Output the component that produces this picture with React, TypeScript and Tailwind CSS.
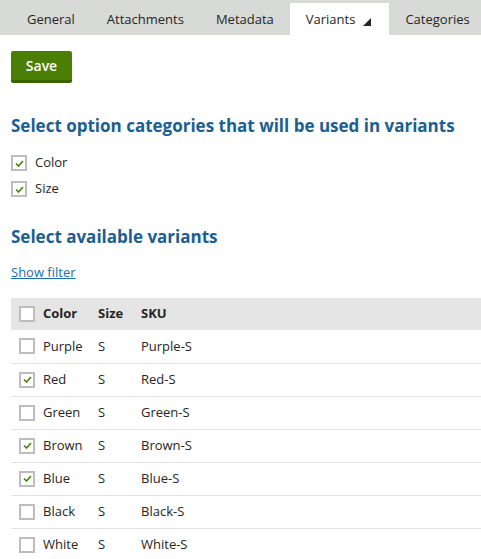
import React from 'react';

type Variant = { color: string; sku: string; checked: boolean };

const variants: Variant[] = [
  { color: 'Purple', sku: 'Purple-S', checked: false },
  { color: 'Red', sku: 'Red-S', checked: true },
  { color: 'Green', sku: 'Green-S', checked: false },
  { color: 'Brown', sku: 'Brown-S', checked: true },
  { color: 'Blue', sku: 'Blue-S', checked: true },
  { color: 'Black', sku: 'Black-S', checked: false },
  { color: 'White', sku: 'White-S', checked: false },
];

const tabs = ['General', 'Attachments', 'Metadata', 'Variants', 'Categories'];

function Checkbox({ checked }: { checked: boolean }) {
  return (
    <span className="flex h-4 w-4 shrink-0 items-center justify-center border-2 border-[#bdbdbd] bg-white">
      {checked && (
        <svg width="9" height="7" viewBox="0 0 9 7">
          <path d="M1 3.5 L3.5 6 L8 1" fill="none" stroke="#4a7e06" strokeWidth="1.6" />
        </svg>
      )}
    </span>
  );
}

export default function App() {
  return (
    <div className="min-h-[559px] w-[481px] overflow-hidden bg-white text-[#262524]" style={{ fontFamily: '"Open Sans", "Noto Sans", sans-serif' }}>
      {/* Tabs */}
      <div className="flex h-[35px] items-end bg-[#d8dad7] pl-[11px]">
        {tabs.map((t) => (
          <div
            key={t}
            className={`flex h-[32px] items-center pt-[2px] text-[13px] ${t === 'Variants' ? 'bg-white pl-4 pr-[18px]' : 'px-4'}`}
          >
            {t}
            {t === 'Variants' && (
              <svg width="8" height="8" viewBox="0 0 8 8" className="ml-2 mt-[3px]">
                <path d="M8 0 L8 8 L0 8 Z" fill="#262524" />
              </svg>
            )}
          </div>
        ))}
      </div>

      <div className="px-[11px]">
        <button className="mt-4 flex h-[32px] w-[61px] items-center justify-center rounded-[2px] border-b-[3px] border-[#3a6403] bg-[#4b7f03] text-[14px] font-semibold text-white">
          Save
        </button>

        <h2 className="mt-[31px] text-[17px] font-bold leading-[24px] text-[#1b5e91]">
          Select option categories that will be used in variants
        </h2>
        <div className="mt-[16px] flex flex-col gap-[8px] text-[13px]">
          <label className="flex h-[18px] items-center gap-[8px]">
            <Checkbox checked />
            Color
          </label>
          <label className="flex h-[18px] items-center gap-[8px]">
            <Checkbox checked />
            Size
          </label>
        </div>

        <h2 className="mt-[27px] text-[17px] font-bold leading-[24px] text-[#1b5e91]">Select available variants</h2>
        <a className="mt-[14px] block text-[13px] leading-[18px] text-[#1a6fa8] underline">Show filter</a>
      </div>

      <table className="ml-[11px] mt-[17px] w-[470px] border-collapse text-[13px]">
        <thead>
          <tr className="h-[32px] bg-[#e5e5e5] text-left font-bold">
            <th className="w-[32px] pl-[8px]">
              <Checkbox checked={false} />
            </th>
            <th className="w-[55px]">Color</th>
            <th className="w-[43px]">Size</th>
            <th>SKU</th>
          </tr>
        </thead>
        <tbody>
          {variants.map((v) => (
            <tr key={v.color} className="h-[33px] border-b border-[#e2e2e2]">
              <td className="pl-[8px]">
                <Checkbox checked={v.checked} />
              </td>
              <td>{v.color}</td>
              <td>S</td>
              <td>{v.sku}</td>
            </tr>
          ))}
        </tbody>
      </table>
    </div>
  );
}
